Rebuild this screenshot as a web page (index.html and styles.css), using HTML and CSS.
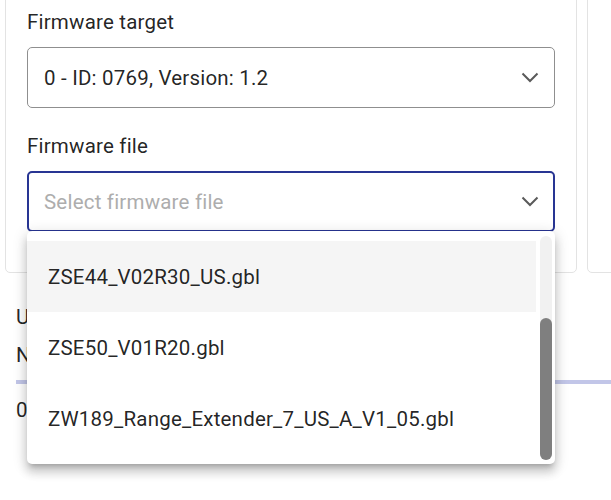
FILE: index.html
```html
<!DOCTYPE html>
<html>
<head>
<meta charset="utf-8">
<link rel="stylesheet" href="styles.css">
</head>
<body>
<div class="page">
  <div class="cards">
    <div class="card">
      <div class="field">
        <div class="label">Firmware target</div>
        <div class="select">
          <span class="value">0 - ID: 0769, Version: 1.2</span>
          <svg class="chev" width="18" height="11" viewBox="0 0 18 11"><path d="M1.5 1.5 L9 9 L16.5 1.5" fill="none" stroke="#5a5a5a" stroke-width="2"/></svg>
        </div>
      </div>
      <div class="field">
        <div class="label">Firmware file</div>
        <div class="select focused">
          <span class="placeholder">Select firmware file</span>
          <svg class="chev" width="18" height="11" viewBox="0 0 18 11"><path d="M1.5 1.5 L9 9 L16.5 1.5" fill="none" stroke="#5a5a5a" stroke-width="2"/></svg>
          <div class="menu">
            <ul class="list">
              <li class="item hover">ZSE44_V02R30_US.gbl</li>
              <li class="item">ZSE50_V01R20.gbl</li>
              <li class="item">ZW189_Range_Extender_7_US_A_V1_05.gbl</li>
            </ul>
            <div class="scroll">
              <div class="track"><div class="thumb"></div></div>
            </div>
          </div>
        </div>
      </div>
    </div>
    <div class="card side"></div>
  </div>
  <div class="status">
    <div class="line">Update progress</div>
    <div class="line">Not started</div>
    <div class="bar"></div>
    <div class="line">0%</div>
  </div>
</div>
</body>
</html>
```

FILE: styles.css
```css
html, body {
  margin: 0;
  padding: 0;
  background: #ffffff;
  overflow: hidden;
  width: 611px;
  height: 500px;
}
body {
  font-family: Roboto, "Liberation Sans", sans-serif;
  color: rgba(0, 0, 0, 0.87);
  letter-spacing: 0.2px;
}
.page {
  margin-top: -20px;
  width: 900px;
}
.cards {
  display: grid;
  grid-template-columns: 572px 300px;
  column-gap: 10px;
  padding-left: 5px;
}
.card {
  border: 1px solid #e3e3e3;
  border-radius: 5px;
  padding: 29px 21px 40px 21px;
  display: flex;
  flex-direction: column;
  gap: 26px;
  background: #fff;
}
.card.side {
  padding: 0;
}
.field {
  display: flex;
  flex-direction: column;
  gap: 13px;
}
.label {
  font-size: 20.5px;
  line-height: 24px;
  height: 24px;
}
.select {
  position: relative;
  height: 61px;
  box-sizing: border-box;
  border: 1px solid #8f8f8f;
  border-radius: 5px;
  display: flex;
  align-items: center;
  padding: 0 15px 0 16px;
  font-size: 20.5px;
}
.select.focused {
  border: 2px solid #283593;
  padding: 0 14px 0 15px;
}
.value, .placeholder {
  flex: 1;
}
.placeholder {
  color: #adadad;
}
.chev {
  display: block;
}
.menu {
  position: absolute;
  top: calc(100% + 1px);
  left: -2px;
  right: -2px;
  height: 233px;
  background: #fff;
  border-radius: 5px;
  box-shadow: 0px 5px 5px -3px rgba(0,0,0,0.2), 0px 8px 10px 1px rgba(0,0,0,0.14), 0px 3px 14px 2px rgba(0,0,0,0.12);
  display: flex;
  z-index: 5;
}
.list {
  list-style: none;
  margin: 0;
  padding: 10px 0 10px 0;
  flex: 1;
}
.item {
  height: 71px;
  display: flex;
  align-items: center;
  padding-left: 21px;
  font-size: 20.5px;
  color: rgba(0, 0, 0, 0.87);
}
.item.hover {
  background: #f5f5f5;
}
.scroll {
  width: 19px;
  box-sizing: border-box;
  padding: 5px 3px 4px 4px;
  display: flex;
}
.track {
  flex: 1;
  background: #f1f1f1;
  border-radius: 6px;
  display: flex;
  flex-direction: column;
  justify-content: flex-end;
}
.thumb {
  height: 142px;
  background: #7f7f7f;
  border-radius: 6px;
}
.status {
  padding: 32px 0 0 16px;
  display: flex;
  flex-direction: column;
}
.line {
  font-size: 20.5px;
  line-height: 24px;
}
.status .line:nth-child(2) {
  margin-top: 14px;
}
.bar {
  height: 4px;
  background: #c2c6e8;
  margin-top: 13px;
}
.status .line:last-child {
  margin-top: 14px;
}
```
